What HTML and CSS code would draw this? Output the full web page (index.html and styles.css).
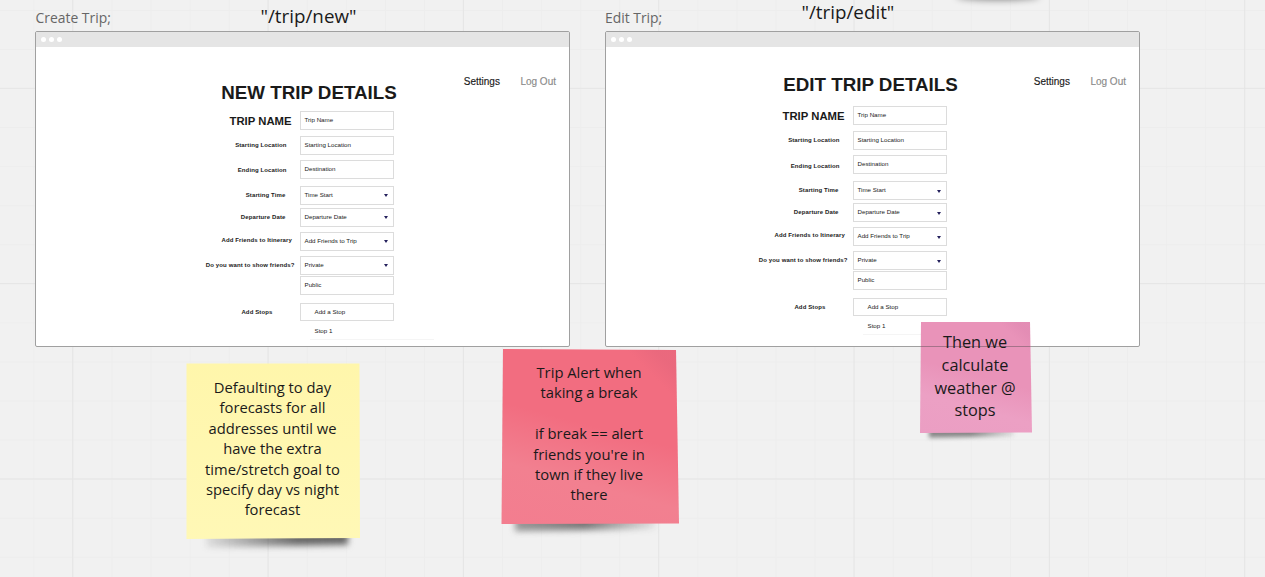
FILE: index.html
```html
<!DOCTYPE html>
<html lang="en">
<head>
<meta charset="utf-8">
<title>Trip planner board</title>
<link rel="stylesheet" href="styles.css">
</head>
<body>
<main class="board">
  <svg class="board-grid" width="1265" height="577" aria-hidden="true">
    <defs>
      <pattern id="minor" x="33.4" y="9.9" width="39.06" height="39.06" patternUnits="userSpaceOnUse"><path d="M.5 0V39.06M0 .5H39.06" stroke="#ededed" fill="none"/></pattern>
      <pattern id="major" x="72.2" y="87.8" width="195.33" height="195.33" patternUnits="userSpaceOnUse"><path d="M.5 0V195.33M0 .5H195.33" stroke="#e5e5e5" fill="none"/></pattern>
    </defs>
    <rect width="1265" height="577" fill="url(#minor)"/>
    <rect width="1265" height="577" fill="url(#major)"/>
  </svg>
  <div class="loose-shadow"></div>

  <h2 class="frame-name frame-name-new">Create Trip;</h2>
  <p class="route route-new">"/trip/new"</p>
  <h2 class="frame-name frame-name-edit">Edit Trip;</h2>
  <p class="route route-edit">"/trip/edit"</p>

  <section class="browser browser-new">
    <header class="bar"><i></i><i></i><i></i></header>
    <nav class="nav"><span>Settings</span><span class="muted">Log Out</span></nav>
    <h1 class="title">NEW TRIP DETAILS</h1>
    <div class="form">
      <div class="row name"><b>TRIP NAME</b><span class="field">Trip Name</span></div>
      <div class="row start"><b>Starting Location</b><span class="field">Starting Location</span></div>
      <div class="row end"><b>Ending Location</b><span class="field">Destination</span></div>
      <div class="row time"><b>Starting Time</b><span class="field select">Time Start</span></div>
      <div class="row date"><b>Departure Date</b><span class="field select">Departure Date</span></div>
      <div class="row friends"><b>Add Friends to Itinerary</b><span class="field select">Add Friends to Trip</span></div>
      <div class="row show"><b>Do you want to show friends?</b><span class="field select">Private</span></div>
      <div class="row public"><b></b><span class="field">Public</span></div>
      <div class="row stops"><b>Add Stops</b><span class="field inset">Add a Stop</span></div>
      <div class="stop">Stop 1</div>
    </div>
  </section>

  <section class="browser browser-edit">
    <header class="bar"><i></i><i></i><i></i></header>
    <nav class="nav"><span>Settings</span><span class="muted">Log Out</span></nav>
    <h1 class="title">EDIT TRIP DETAILS</h1>
    <div class="form">
      <div class="row name"><b>TRIP NAME</b><span class="field">Trip Name</span></div>
      <div class="row start"><b>Starting Location</b><span class="field">Starting Location</span></div>
      <div class="row end"><b>Ending Location</b><span class="field">Destination</span></div>
      <div class="row time"><b>Starting Time</b><span class="field select">Time Start</span></div>
      <div class="row date"><b>Departure Date</b><span class="field select">Departure Date</span></div>
      <div class="row friends"><b>Add Friends to Itinerary</b><span class="field select">Add Friends to Trip</span></div>
      <div class="row show"><b>Do you want to show friends?</b><span class="field select">Private</span></div>
      <div class="row public"><b></b><span class="field">Public</span></div>
      <div class="row stops"><b>Add Stops</b><span class="field inset">Add a Stop</span></div>
      <div class="stop">Stop 1</div>
    </div>
  </section>

  <article class="note yellow"><div class="shadow"></div><div class="paper"></div>
    <p>Defaulting to day<br>forecasts for all<br>addresses until we<br>have the extra<br>time/stretch goal to<br>specify day vs night<br>forecast</p></article>
  <article class="note red"><div class="shadow"></div><div class="paper"></div>
    <p>Trip Alert when<br>taking a break<br><br>if break == alert<br>friends you're in<br>town if they live<br>there</p></article>
  <article class="note pink"><div class="shadow"></div><div class="paper"></div>
    <p>Then we<br>calculate<br>weather @<br>stops</p></article>
</main>
</body>
</html>
```
FILE: styles.css
```css
* { box-sizing: border-box; }
body { margin: 0; }
.board {
  position: relative;
  width: 1265px;
  height: 577px;
  overflow: hidden;
  background: #f1f1f1;
  font-family: "Liberation Sans", Arial, sans-serif;
  color: #1a1a1a;
}
.board-grid { position: absolute; inset: 0; }
.loose-shadow {
  position: absolute;
  left: 956px;
  top: -9px;
  width: 84px;
  height: 8px;
  box-shadow: 0 1px 7px rgba(0, 0, 0, .45);
  border-radius: 50%;
}

.frame-name, .route {
  position: absolute;
  margin: 0;
  font-family: "Open Sans", "Noto Sans", sans-serif;
  font-weight: 400;
  white-space: nowrap;
}
.frame-name { top: 8px; font-size: 13.9px; line-height: 20px; color: #666; }
.frame-name-new { left: 35.5px; }
.frame-name-edit { left: 605px; }
.route { font-size: 18.8px; line-height: 26px; }
.route-new { left: 260.5px; top: 3px; }
.route-edit { left: 801.5px; top: -1px; }

/* Wireframed browser windows */
.browser {
  position: absolute;
  top: 31px;
  width: 535px;
  height: 316px;
  border: 1px solid #a0a0a0;
  border-radius: 2px;
  background: #fff;
  overflow: hidden;
}
.browser-new { left: 35px; }
.browser-edit { left: 605px; }
.bar {
  display: flex;
  align-items: center;
  gap: 2.9px;
  height: 15px;
  padding-left: 5px;
  background: #e5e5e5;
}
.bar i { width: 5px; height: 5px; border-radius: 50%; background: #fff; }
.nav {
  display: flex;
  justify-content: flex-end;
  gap: 20.5px;
  height: 14px;
  margin-top: 28px;
  padding-right: 13px;
  font-size: 10px;
  line-height: 14px;
  -webkit-text-stroke: .15px;
}
.nav .muted { color: #8a8a8a; }
.title {
  width: 240px;
  margin: 0 0 0 153px;
  text-align: center;
  font-size: 18.8px;
  line-height: 22px;
  white-space: nowrap;
}
.browser-new .title { margin-top: -7px; }
.browser-edit .title { margin: -15px 0 0 144.5px; }
.form { width: 227px; margin: 6.5px 0 0 131px; font-size: 6.2px; }
.browser-edit .form { margin: 10px 0 0 114px; }
.row { display: grid; grid-template-columns: 133px 94px; height: 19px; }
.row b { text-align: right; line-height: 19px; padding-right: 13.5px; font-size: 6px; letter-spacing: .12px; white-space: nowrap; }
.field {
  position: relative;
  height: 19px;
  padding-left: 3.5px;
  border: 1px solid #dcdcdc;
  line-height: 16px;
  white-space: nowrap;
}
.select::after {
  content: "";
  position: absolute;
  right: 5px;
  top: 7.5px;
  border: 2.5px solid transparent;
  border-top: 3px solid #24205c;
  border-bottom: 0;
}
.field.inset { padding-left: 13.5px; }
.row.name b { font-size: 11.3px; line-height: 20px; padding-right: 8.5px; letter-spacing: 0; }
.row.start { margin-top: 6px; }
.row.end { margin-top: 5px; }
.row.end b { padding-top: 1.5px; }
.row.time { margin-top: 7px; }
.row.time b { padding-right: 14.5px; }
.row.date { margin-top: 3px; }
.row.date b { padding-right: 14.5px; }
.row.friends { margin-top: 5px; }
.row.friends b { padding-right: 8px; line-height: 17px; }
.row.show { margin-top: 5px; }
.row.show b { padding-right: 5.5px; }
.row.public { margin-top: 1px; }
.row.stops { margin-top: 8px; }
.row.stops b { padding-right: 27.5px; }
.row.stops .field { height: 18px; }
.stop { width: 124px; margin-left: 143px; padding-left: 4.5px; height: 18px; line-height: 18px; border-bottom: 1px solid #f5f5f5; }

/* Sticky notes */
.note { position: absolute; font-family: "Open Sans", "Noto Sans", sans-serif; text-align: center; }
.note p { position: relative; margin: 0; font-size: 14.75px; line-height: 20.4px; white-space: nowrap; }
.paper { position: absolute; inset: 0; }
.shadow { position: absolute; filter: blur(3px); }
.yellow { left: 186px; top: 363px; width: 174px; height: 176px; padding: 14px 1px 0 0; }
.yellow .shadow { inset: 150px 12px -7px 20px; background: linear-gradient(90deg, rgba(60,60,60,.1), rgba(60,60,60,.75) 65%, #666); transform: skewY(-1deg); }
.yellow .paper { background: linear-gradient(#fff6ab, #fff8b6); clip-path: polygon(.5px .5px, 173.5px .5px, 100% 175px, .5px 100%); }
.red { left: 501px; top: 349px; width: 178px; height: 175px; padding: 13px 2px 0 0; }
.red .shadow { inset: 150px 24px -6px 14px; background: linear-gradient(90deg, #999, #777 50%, rgba(80,80,80,.1)); transform: skewY(-1deg); }
.red .paper {
  background: linear-gradient(45deg, transparent 85%, rgba(190,80,110,.15) 93%), linear-gradient(195deg, #f26d80 45%, #f28090 72%, #f37d8f);
  clip-path: polygon(2px 0, 175px 1px, 100% 174.5px, .5px 100%);
}
.pink { left: 920px; top: 322px; width: 112px; height: 111px; padding-top: 9px; }
.pink .shadow { inset: 90px 18px -4px 9px; background: linear-gradient(90deg, #888, #888 50%, rgba(80,80,80,.1)); filter: blur(2px); transform: skewY(-1deg); }
.pink .paper {
  background: linear-gradient(#a67289, #a67289) 0 24px / 100% 1px no-repeat, linear-gradient(45deg, transparent 85%, rgba(190,100,150,.13) 93%), linear-gradient(195deg, #e993b9 48%, #eca0c4 72%, #eb9ec3);
  clip-path: polygon(1px 0, 110px 0, 100% 110.5px, 0 100%);
}
.pink p { font-size: 16.3px; line-height: 22.8px; padding-right: 2px; }
```
